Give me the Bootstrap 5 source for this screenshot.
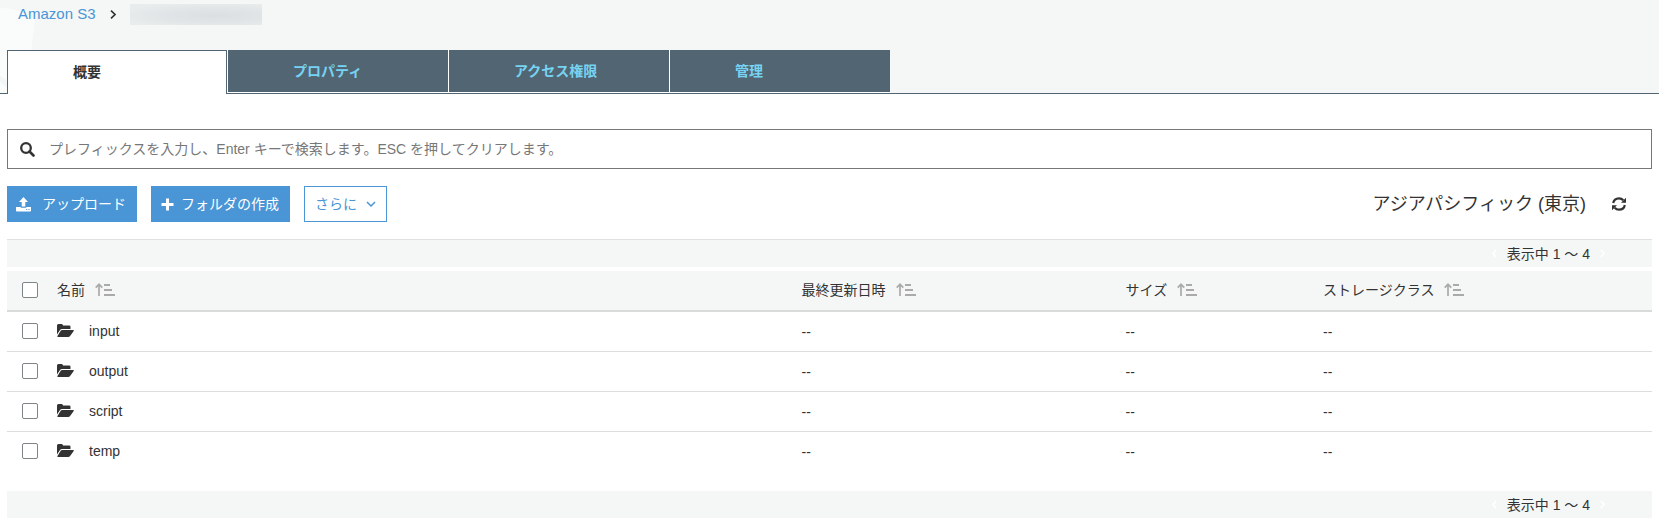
<!DOCTYPE html>
<html lang="ja">
<head>
<meta charset="utf-8">
<meta name="viewport" content="width=device-width, initial-scale=1">
<title>Amazon S3</title>
<link href="https://cdn.jsdelivr.net/npm/bootstrap@5.3.0/dist/css/bootstrap.min.css" rel="stylesheet">
<style>
  :root { --s3-blue: #4a95d5; --s3-slate: #526572; --s3-band: #f5f7f7; --s3-ink: #333; }
  body { font: 14px/20px "Liberation Sans", "Noto Sans CJK JP", sans-serif; color: var(--s3-ink); background: #fff; }
  svg { display: block; flex: none; }
  .page-x { padding-left: 7px; padding-right: 7px; }

  .s3-header { background: var(--s3-band); border-bottom: 1px solid var(--s3-slate); }
  .s3-bucket-art { position: absolute; left: 0; top: 0; }
  .s3-crumbs { height: 50px; padding: 4px 18px; gap: 14px; font-size: 15px; }
  .s3-crumbs li { height: 21px; }
  .s3-crumbs a { color: var(--s3-blue); text-decoration: none; }
  .bucket-hidden { width: 132px; height: 21px; background: radial-gradient(ellipse at 64% 55%, #dbdfe2 0, #e2e5e7 45%, #e9ecec 80%); }

  .s3-tabs { gap: 1px; border: 0; margin-bottom: -1px; background: linear-gradient(#fff, #fff) no-repeat; background-size: 883px 43px; }
  .s3-tabs .nav-link { width: 220px; height: 42px; padding: 0 0 0 65px; border: 0; border-radius: 0; margin: 0; background: var(--s3-slate); color: #76d3f3; font-weight: 700; text-align: left; }
  .s3-tabs .nav-link.active { height: 44px; padding-bottom: 2px; border: 1px solid var(--s3-slate); border-bottom: 0; background: #fff; color: var(--s3-ink); }

  .s3-search { height: 40px; margin-top: 35px; border: 1px solid #777; padding-left: 12px; gap: 14px; }
  .s3-search input { border: 0; padding: 0; height: 38px; font-size: 14px; border-radius: 0; background: none; color: var(--s3-ink); }
  .s3-search input:focus { box-shadow: none; }
  .s3-search input::placeholder { color: #777; opacity: 1; }

  .s3-tools { padding: 17px 0; border-bottom: 1px solid #e1e1e1; }
  .tool-set { gap: 14px; }
  .s3-btn { --bs-btn-border-radius: 0; --bs-btn-font-size: 14px; --bs-btn-line-height: 20px;
    --bs-btn-color: #fff; --bs-btn-bg: var(--s3-blue); --bs-btn-border-color: var(--s3-blue);
    --bs-btn-hover-color: #fff; --bs-btn-hover-bg: #3a82c0; --bs-btn-hover-border-color: #3a82c0;
    height: 36px; padding: 7px 10px 7px 9px; gap: 7px; }
  .s3-btn-upload { padding-left: 8px; gap: 11px; }
  .s3-btn-line { --bs-btn-color: var(--s3-blue); --bs-btn-bg: #fff; padding-left: 10px; gap: 9px; }
  .s3-region { font-size: 18px; line-height: 28px; }
  .region-set { gap: 26px; padding-right: 26px; }
  .s3-plain { background: none; border: 0; padding: 0; color: inherit; }

  .s3-pager { height: 27px; background: var(--s3-band); padding-right: 47px; gap: 10px; }
  .s3-pager button { color: #fff; }

  .s3-table { table-layout: fixed; border-collapse: separate; border-spacing: 0; margin: 4px 0 19px; --bs-table-bg: transparent; --bs-table-color: var(--s3-ink); color: var(--s3-ink); }
  .s3-table > :not(caption) > * > * { padding: 0; height: 40px; border-bottom: 1px solid #ddd; vertical-align: middle; }
  .s3-table > thead > tr > th { height: 41px; padding-bottom: 2px; background: var(--s3-band); border-bottom: 2px solid #d9dbdb; font-weight: 400; }
  .s3-table > tbody > tr > :nth-child(-n+2) { padding-bottom: 2px; }
  .s3-table > tbody > tr:last-child > * { border-bottom-color: transparent; }
  .s3-table .form-check-input { display: block; width: 16px; height: 16px; margin: 0 0 0 15px; border: 1px solid #7d8587; border-radius: 2px; }
  .s3-table tbody a { color: inherit; text-decoration: none; gap: 15px; }
  .sort-head { gap: 10px; }
  .col-tick { width: 50px; } .col-date { width: 19.7%; } .col-size { width: 12%; } .col-class { width: 20%; }
</style>
</head>
<body>
<svg class="d-none" aria-hidden="true">
  <symbol id="sort" viewBox="0 0 20 13"><path d="M4 13V1.500M.7 4.600 4 1.300l3.300 3.300" fill="none" stroke="#aaa" stroke-width="1.700"/><path d="M9 1h6v2H9zM9 6h8v2H9zM9 11h11v2H9z" fill="#aaa"/></symbol>
  <symbol id="folder" viewBox="0 0 17 13"><path d="M0 10.500V1.500Q0 0 1.500 0h3.200Q6 0 6 1.500h6.200q1.300 0 1.300 1.300V5H5Q3.800 5 3 6z" fill="#333"/><path d="M5.200 6H16.200q1.200 0 .5 1l-3.600 5q-.7 1-1.900 1H1q-1.200 0-.5-1l3.200-5.200q.5-.8 1.500-.8z" fill="#333"/></symbol>
  <symbol id="chev-l" viewBox="0 0 5 9"><path d="M4.300.7 1 4.500l3.300 3.800" fill="none" stroke="currentColor" stroke-width="1.400"/></symbol>
  <symbol id="chev-r" viewBox="0 0 5 9"><path d="M.7.7 4 4.500.7 8.300" fill="none" stroke="currentColor" stroke-width="1.400"/></symbol>
</svg>

<header class="s3-header position-relative">
  <svg class="s3-bucket-art" width="36" height="93" aria-hidden="true"><path d="M0 8Q20 8 35 20L30 60 26 93H0z" fill="#fafcfc"/><path d="M0 76q5 2 8 7v6q-4-5-8-7z" fill="#f2f5f5"/></svg>
  <nav class="position-relative" aria-label="breadcrumb">
    <ol class="s3-crumbs list-unstyled d-flex m-0">
      <li><a href="#">Amazon S3</a></li>
      <li class="d-flex align-items-center"><svg width="6" height="9" viewBox="0 0 6 9"><path d="M1 .7 5 4.500 1 8.300" fill="none" stroke="#333" stroke-width="1.600"/></svg></li>
      <li><div class="bucket-hidden"></div></li>
    </ol>
  </nav>
  <div class="page-x position-relative">
    <div class="s3-tabs nav nav-tabs align-items-start" role="tablist">
      <button class="nav-link active" type="button" role="tab" aria-selected="true">概要</button>
      <button class="nav-link" type="button" role="tab">プロパティ</button>
      <button class="nav-link" type="button" role="tab">アクセス権限</button>
      <button class="nav-link" type="button" role="tab">管理</button>
    </div>
  </div>
</header>

<main class="page-x">
  <div class="s3-search d-flex align-items-center">
    <svg width="15" height="15" viewBox="0 0 15 15"><circle cx="6" cy="6" r="4.800" fill="none" stroke="#333" stroke-width="2.300"/><path d="m9.500 9.500 4 4" stroke="#333" stroke-width="2.600" stroke-linecap="round"/></svg>
    <input class="form-control" type="text" aria-label="検索" placeholder="プレフィックスを入力し、Enter キーで検索します。ESC を押してクリアします。">
  </div>

  <div class="s3-tools d-flex flex-wrap align-items-center justify-content-between">
    <div class="tool-set d-flex">
      <button type="button" class="btn s3-btn s3-btn-upload d-flex align-items-center"><svg width="15" height="15" viewBox="0 0 15 15" fill="#fff"><path d="M7.500 0 12 5H9.300v4.500H5.700V5H3z"/><path d="M0 10h4.700v.8h5.600V10H15v3.700q0 .8-.8.8H.8q-.8 0-.8-.8zm10.200 2v1h1v-1zm2.300 0v1h1v-1z" fill-rule="evenodd"/></svg><span>アップロード</span></button>
      <button type="button" class="btn s3-btn d-flex align-items-center"><svg width="13" height="13" viewBox="0 0 13 13" fill="#fff"><path d="M5 .5h3V5h4.500v3H8v4.500H5V8H.5V5H5z"/></svg><span>フォルダの作成</span></button>
      <button type="button" class="btn s3-btn s3-btn-line d-flex align-items-center"><span>さらに</span><svg width="10" height="6" viewBox="0 0 10 6"><path d="m1 1 4 4 4-4" fill="none" stroke="#4a95d5" stroke-width="1.500"/></svg></button>
    </div>
    <div class="region-set d-flex align-items-center">
      <span class="s3-region">アジアパシフィック (東京)</span>
      <button type="button" class="s3-plain" aria-label="更新"><svg width="14" height="14" viewBox="0 0 14 14"><path d="M1.200 6Q2 1.400 7 1.300q2.600 0 4.300 2M12.800 8Q12 12.600 7 12.700q-2.600 0-4.300-2" fill="none" stroke="#333" stroke-width="2.200"/><path d="M14 .8v5H9zM0 13.200v-5h5z" fill="#333"/></svg></button>
    </div>
  </div>

  <div class="s3-pager d-flex align-items-center justify-content-end">
    <button type="button" class="s3-plain" aria-label="前へ"><svg width="5" height="9"><use href="#chev-l"/></svg></button>
    <span>表示中 1 ～ 4</span>
    <button type="button" class="s3-plain" aria-label="次へ"><svg width="5" height="9"><use href="#chev-r"/></svg></button>
  </div>

  <table class="table s3-table">
    <colgroup><col class="col-tick"><col><col class="col-date"><col class="col-size"><col class="col-class"></colgroup>
    <thead>
      <tr>
        <th><input class="form-check-input" type="checkbox" aria-label="すべて選択"></th>
        <th><div class="sort-head d-flex align-items-center">名前<svg width="20" height="13"><use href="#sort"/></svg></div></th>
        <th><div class="sort-head d-flex align-items-center">最終更新日時<svg width="20" height="13"><use href="#sort"/></svg></div></th>
        <th><div class="sort-head d-flex align-items-center">サイズ<svg width="20" height="13"><use href="#sort"/></svg></div></th>
        <th><div class="sort-head d-flex align-items-center">ストレージクラス<svg width="20" height="13"><use href="#sort"/></svg></div></th>
      </tr>
    </thead>
    <tbody>
      <tr><td><input class="form-check-input" type="checkbox" aria-label="input"></td><td><a href="#" class="d-flex align-items-center"><svg width="17" height="13"><use href="#folder"/></svg>input</a></td><td>--</td><td>--</td><td>--</td></tr>
      <tr><td><input class="form-check-input" type="checkbox" aria-label="output"></td><td><a href="#" class="d-flex align-items-center"><svg width="17" height="13"><use href="#folder"/></svg>output</a></td><td>--</td><td>--</td><td>--</td></tr>
      <tr><td><input class="form-check-input" type="checkbox" aria-label="script"></td><td><a href="#" class="d-flex align-items-center"><svg width="17" height="13"><use href="#folder"/></svg>script</a></td><td>--</td><td>--</td><td>--</td></tr>
      <tr><td><input class="form-check-input" type="checkbox" aria-label="temp"></td><td><a href="#" class="d-flex align-items-center"><svg width="17" height="13"><use href="#folder"/></svg>temp</a></td><td>--</td><td>--</td><td>--</td></tr>
    </tbody>
  </table>

  <div class="s3-pager d-flex align-items-center justify-content-end">
    <button type="button" class="s3-plain" aria-label="前へ"><svg width="5" height="9"><use href="#chev-l"/></svg></button>
    <span>表示中 1 ～ 4</span>
    <button type="button" class="s3-plain" aria-label="次へ"><svg width="5" height="9"><use href="#chev-r"/></svg></button>
  </div>
</main>
<script src="https://cdn.jsdelivr.net/npm/bootstrap@5.3.0/dist/js/bootstrap.bundle.min.js"></script>
</body>
</html>
